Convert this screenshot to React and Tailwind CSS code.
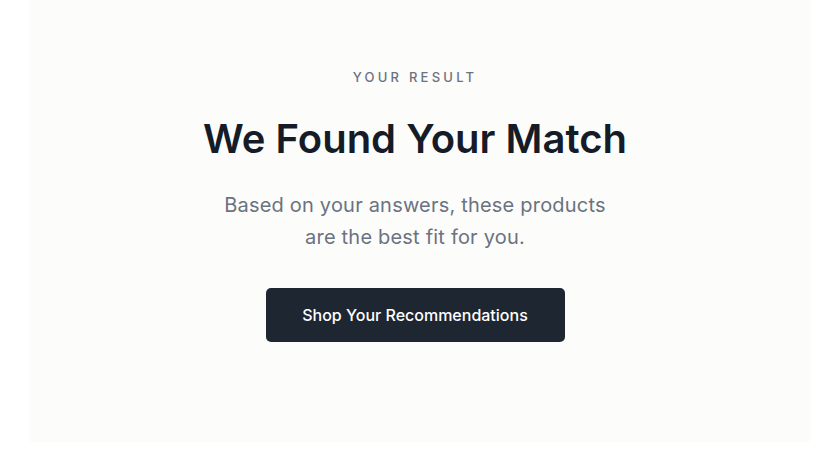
export default function App() {
  return (
    <div className="w-[840px] h-[474px] bg-white" style={{ fontFamily: 'Inter, "Noto Sans", sans-serif' }}>
      <section className="mx-[30px] h-[442px] bg-[#fcfcfb] flex flex-col items-center pt-[68px] pr-[10px]">
        <p className="text-[13px] leading-[18px] font-medium tracking-[0.25em] text-[#6b7280] uppercase">
          Your Result
        </p>
        <h1 className="mt-[29px] text-[40px] leading-[48px] font-semibold tracking-[0] text-[#151c28]">
          We Found Your Match
        </h1>
        <p className="mt-[26px] text-[20px] leading-[32px] tracking-[0.01em] text-[#6b7280] text-center w-[400px]">
          Based on your answers, these products are the best fit for you.
        </p>
        <button className="mt-[35px] w-[299px] h-[54px] rounded-[5px] bg-[#1e2632] text-white text-[16px] font-medium">
          Shop Your Recommendations
        </button>
      </section>
    </div>
  );
}
